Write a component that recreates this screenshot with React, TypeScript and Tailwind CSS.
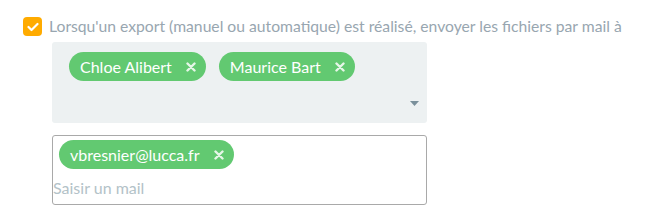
import React from "react";

function Chip({ label }: { label: string }) {
  return (
    <span className="inline-flex h-[29px] items-center rounded-full bg-[#62c971] pl-[11px] pr-[10px] text-[16px] leading-none text-white">
      <span>{label}</span>
      <svg className="ml-[14px]" width="10" height="10" viewBox="0 0 10 10">
        <path d="M1.5 1.5L8.5 8.5M8.5 1.5L1.5 8.5" stroke="#e6f6e8" strokeWidth="2.4" strokeLinecap="round" />
      </svg>
    </span>
  );
}

export default function App() {
  return (
    <div className="h-[218px] w-[655px] bg-white pt-[17px] pl-[23px]" style={{ fontFamily: "Lato, 'Open Sans', sans-serif" }}>
      <div className="flex items-start gap-[7px]">
        <span className="flex h-[19px] w-[19px] shrink-0 items-center justify-center rounded-[4px] bg-[#ffab00]">
          <svg width="12" height="10" viewBox="0 0 12 10">
            <path d="M1.5 5L4.5 8L10.5 2" stroke="white" strokeWidth="2.2" fill="none" strokeLinecap="round" strokeLinejoin="round" />
          </svg>
        </span>
        <span className="whitespace-nowrap text-[15.7px] leading-[19px] text-[#98a6b0]">
          Lorsqu'un export (manuel ou automatique) est réalisé, envoyer les fichiers par mail à
        </span>
      </div>
      <div className="ml-[29px] mt-[6px] w-[375px]">
        <div className="relative h-[81px] rounded-[3px] bg-[#edf1f2] pl-[17px] pt-[10px]">
          <div className="flex gap-[13px]">
            <Chip label="Chloe Alibert" />
            <Chip label="Maurice Bart" />
          </div>
          <svg className="absolute right-[8px] top-[59px]" width="9" height="5" viewBox="0 0 9 5">
            <path d="M0 0H9L4.5 5Z" fill="#7a909b" />
          </svg>
        </div>
        <div className="mt-[12px] h-[70px] rounded-[3px] border border-[#a9a9a9] pl-[6px] pt-[4px]">
          <Chip label="vbresnier@lucca.fr" />
          <div className="-ml-[6px] mt-[9px] text-[16px] leading-[20px] text-[#b3c2c8]">Saisir un mail</div>
        </div>
      </div>
    </div>
  );
}
